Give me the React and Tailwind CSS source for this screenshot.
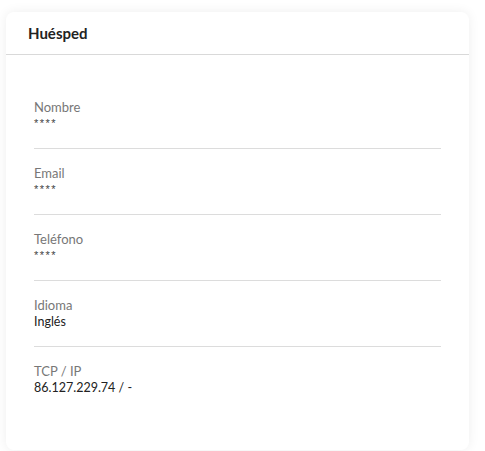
const fields = [
  { label: 'Nombre', value: '****', small: true },
  { label: 'Email', value: '****', small: true },
  { label: 'Teléfono', value: '****', small: true },
  { label: 'Idioma', value: 'Inglés' },
  { label: 'TCP / IP', value: '86.127.229.74 / -' },
]

function Field({ label, value, small, last }) {
  return (
    <div className={`pt-4 pb-4 ${last ? '' : 'border-b border-[#dcdcdc]'}`}>
      <div className="text-[13px] leading-4 text-[#777]">{label}</div>
      {small ? (
        <div className="text-[11px] leading-[17px] tracking-[1.5px] text-[#444]" style={{ fontFamily: '"Liberation Sans", sans-serif' }}>
          {value}
        </div>
      ) : (
        <div className="text-[12.5px] leading-[17px] text-[#222]">{value}</div>
      )}
    </div>
  )
}

export default function App() {
  return (
    <div className="min-h-[451px] bg-white pt-[12px] pl-[6px]" style={{ fontFamily: 'Lato, "Noto Sans", sans-serif' }}>
      <div className="w-[463px] rounded-lg bg-white shadow-[0_0_12px_rgba(0,0,0,0.07)]">
        <div className="h-[43px] flex items-center px-[22px] border-b border-[#d9d9d9]">
          <h2 className="text-[15px] font-bold text-[#222]">Huésped</h2>
        </div>
        <div className="px-[28px] pt-[28px] pb-[38px]">
          {fields.map((f, i) => (
            <Field key={f.label} {...f} last={i === fields.length - 1} />
          ))}
        </div>
      </div>
    </div>
  )
}
